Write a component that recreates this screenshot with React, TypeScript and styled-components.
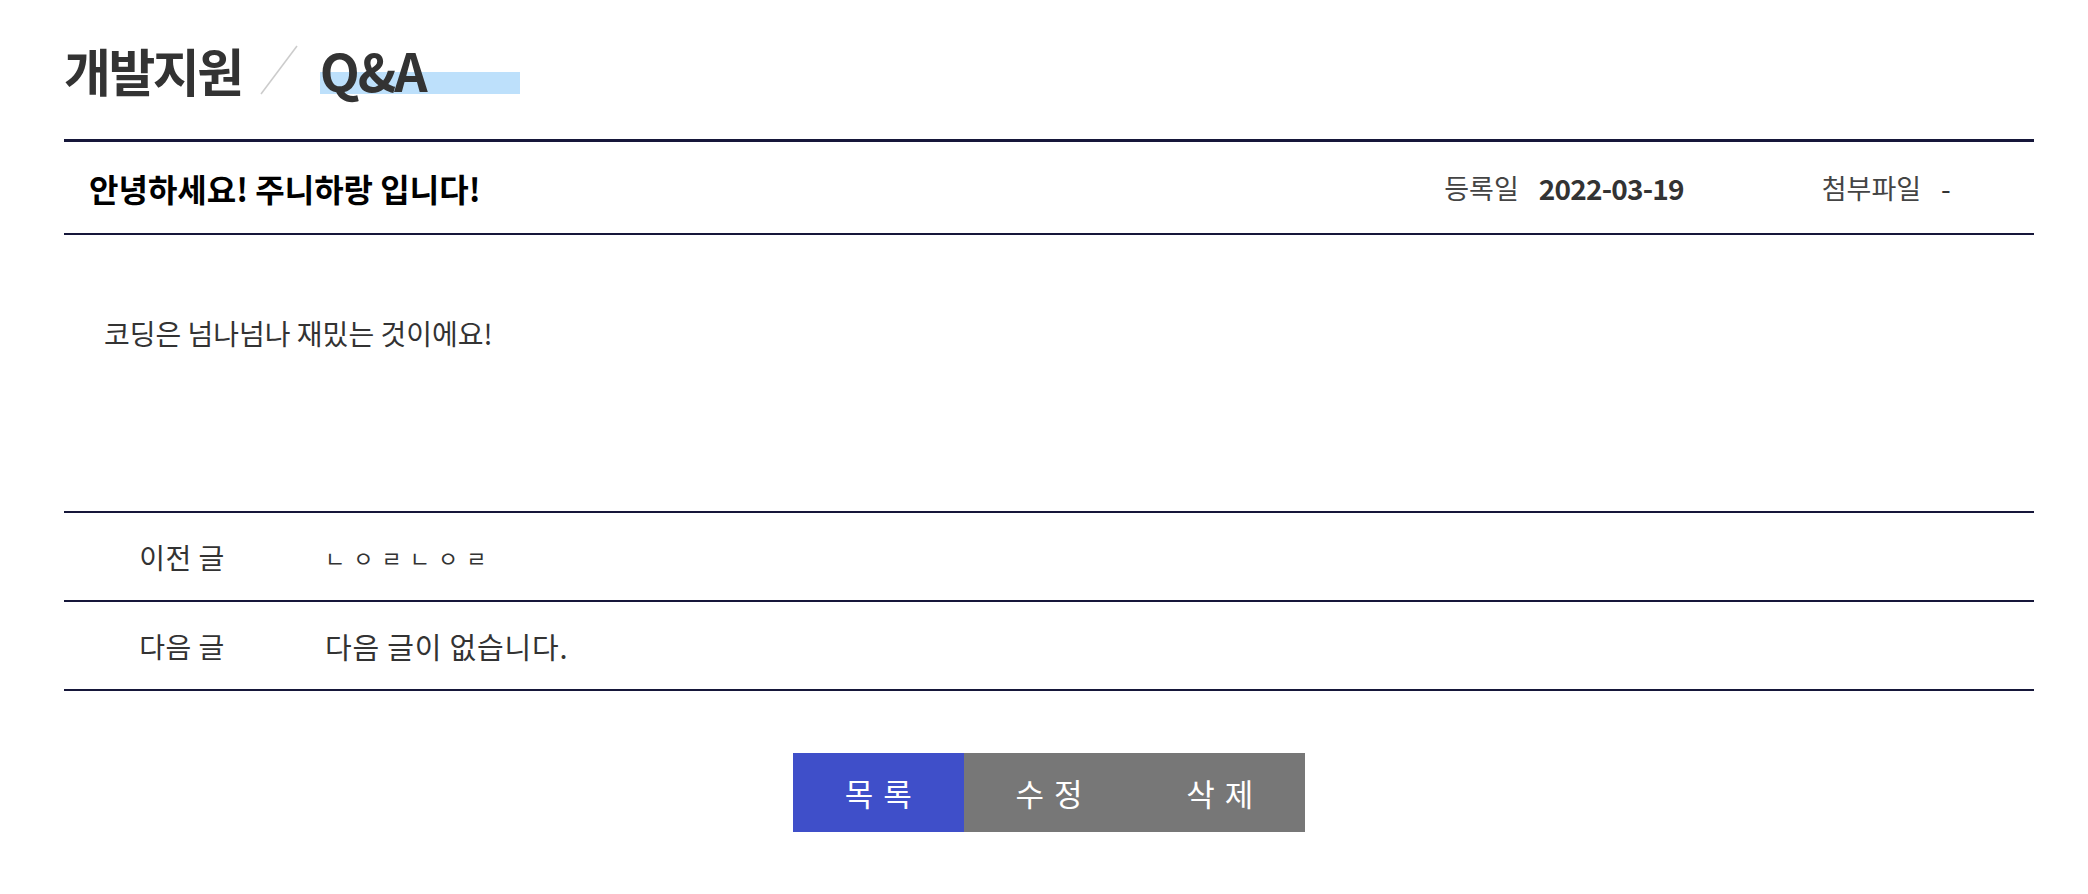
import React from 'react';
import styled, { createGlobalStyle } from 'styled-components';

const GlobalStyle = createGlobalStyle`
  body {
    margin: 0;
    background: #fff;
    font-family: "Noto Sans CJK KR", "Noto Sans", sans-serif;
  }
`;

const LINE = '#16173a';

const Page = styled.div`
  padding: 30px 54px 60px 64px;
`;

const TitleBar = styled.div`
  display: flex;
  align-items: center;
  height: 80px;
  margin-bottom: 29px;
`;

const Section = styled.h2`
  margin: 0;
  font-size: 51px;
  font-weight: 700;
  letter-spacing: -2.5px;
  line-height: 1;
  color: #333;
`;

const Slash = styled.svg`
  flex: none;
  margin: 0 22px 0 18px;
`;

const Current = styled.span`
  display: inline-block;
  width: 200px;
  height: 60px;
  font-size: 52px;
  font-weight: 700;
  letter-spacing: -2px;
  line-height: 60px;
  color: #333;
  background: linear-gradient(
    to bottom,
    transparent 32px,
    #bde0fb 32px,
    #bde0fb 54px,
    transparent 54px
  );
`;

const Board = styled.div`
  border-top: 3px solid ${LINE};
`;

const InfoRow = styled.div`
  display: flex;
  align-items: center;
  height: 91px;
  padding: 0 84px 0 25px;
  border-bottom: 2px solid ${LINE};
`;

const Subject = styled.h3`
  flex: 1;
  margin: 0;
  font-size: 32px;
  font-weight: 700;
  letter-spacing: 0;
  color: #000;
`;

const Meta = styled.div`
  display: flex;
  align-items: center;
  gap: 20px;
  & + & {
    margin-left: 138px;
  }
`;

const MetaLabel = styled.span`
  font-size: 27px;
  letter-spacing: 0;
  color: #444;
`;

const MetaValue = styled.span<{ $light?: boolean }>`
  font-size: 28px;
  font-weight: ${p => (p.$light ? 400 : 700)};
  letter-spacing: -0.8px;
  color: #333;
`;

const Body = styled.div`
  height: 276px;
  box-sizing: border-box;
  padding: 78px 40px 0;
  font-size: 28px;
  letter-spacing: 0;
  line-height: 40px;
  color: #333;
`;

const NavList = styled.div`
  border-top: 2px solid ${LINE};
`;

const NavRow = styled.div`
  display: flex;
  align-items: center;
  height: 87px;
  border-bottom: 2px solid ${LINE};
  font-size: 28px;
  color: #333;
`;

const NavLabel = styled.span`
  width: 236px;
  text-align: center;
  letter-spacing: 0.5px;
`;

const NavValue = styled.span<{ $spaced?: boolean }>`
  padding-left: 25px;
  letter-spacing: ${p => (p.$spaced ? '8px' : '0.8px')};
  font-size: ${p => (p.$spaced ? '22px' : '29px')};
`;

const Actions = styled.div`
  display: flex;
  justify-content: center;
  margin-top: 62px;
`;

const ActionButton = styled.button<{ $primary?: boolean }>`
  width: 170.67px;
  height: 79px;
  border: 0;
  padding: 0 0 0 10px;
  background: ${p => (p.$primary ? '#3f4fc9' : '#777777')};
  color: #fff;
  font-family: inherit;
  font-size: 31px;
  letter-spacing: 10px;
  cursor: pointer;
`;

export default function App() {
  return (
    <Page>
      <GlobalStyle />
      <TitleBar>
        <Section>개발지원</Section>
        <Slash width="38" height="50" viewBox="0 0 38 50">
          <line x1="1" y1="49" x2="37" y2="1" stroke="#cccccc" strokeWidth="1.6" />
        </Slash>
        <Current>Q&amp;A</Current>
      </TitleBar>

      <Board>
        <InfoRow>
          <Subject>안녕하세요! 주니하랑 입니다!</Subject>
          <Meta>
            <MetaLabel>등록일</MetaLabel>
            <MetaValue>2022-03-19</MetaValue>
          </Meta>
          <Meta>
            <MetaLabel>첨부파일</MetaLabel>
            <MetaValue $light>-</MetaValue>
          </Meta>
        </InfoRow>

        <Body>코딩은 넘나넘나 재밌는 것이에요!</Body>

        <NavList>
          <NavRow>
            <NavLabel>이전 글</NavLabel>
            <NavValue $spaced>ㄴㅇㄹㄴㅇㄹ</NavValue>
          </NavRow>
          <NavRow>
            <NavLabel>다음 글</NavLabel>
            <NavValue>다음 글이 없습니다.</NavValue>
          </NavRow>
        </NavList>
      </Board>

      <Actions>
        <ActionButton $primary>목록</ActionButton>
        <ActionButton>수정</ActionButton>
        <ActionButton>삭제</ActionButton>
      </Actions>
    </Page>
  );
}
